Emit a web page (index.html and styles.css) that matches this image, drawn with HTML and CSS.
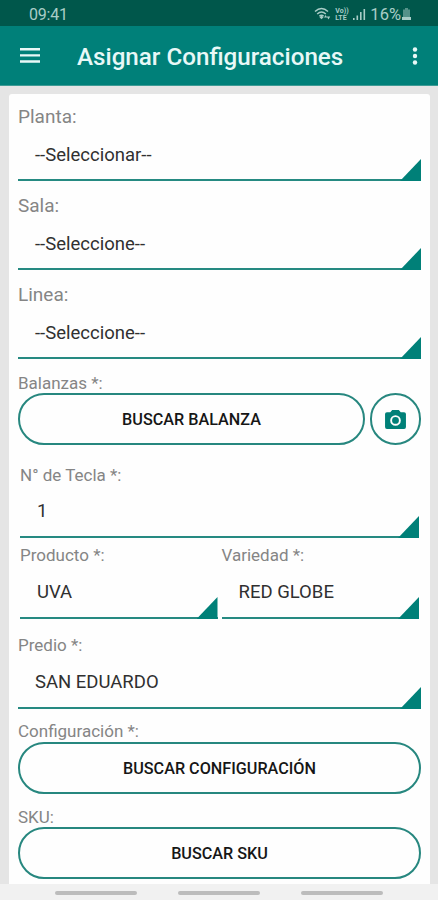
FILE: index.html
```html
<!DOCTYPE html>
<html lang="es">
<head>
<meta charset="utf-8">
<title>Asignar Configuraciones</title>
<link rel="stylesheet" href="styles.css">
</head>
<body>
<div class="status">
  <span class="clock">09:41</span>
  <div class="status-icons">
    <svg class="wifi" width="17" height="14" viewBox="0 0 17 14" fill="none" stroke="currentColor" stroke-width="1.5"><path d="M1 4.500Q7.500-1.500 14 4.500M3.200 7Q7.500 3 11.800 7M5.400 9.300Q7.500 7.300 9.600 9.300"/><path d="M7.500 8.500l-2 1.700 2 2 2-2zM10 10.500l1.600-2.500 1.600 2.500zM12.800 9.500l1.700 3 1.700-3z" fill="currentColor" stroke="none"/></svg>
    <span class="volte"><span>Vo))</span><span>LTE</span></span>
    <svg class="signal" width="13" height="13" viewBox="0 0 13 13" fill="currentColor"><path d="M0 10h1.600v2H0zM3.500 7.500h1.600V12H3.500zM7 4h1.600v8H7zM10.500 1h1.600v11h-1.600z"/></svg>
    <span class="percent">16%</span>
    <svg class="battery" width="9" height="13" viewBox="0 0 9 13" fill="currentColor"><path d="M3 0h3v1.500h2V9H1V1.500h2z" opacity=".5"/><path d="M0 9h9v3H0z"/></svg>
  </div>
</div>
<header class="appbar">
  <svg class="menu" width="20" height="15" viewBox="0 0 20 15" fill="currentColor"><path d="M0 0h20v2.500H0zM0 6.200h20v2.400H0zM0 12.300h20v2.400H0z"/></svg>
  <h1>Asignar Configuraciones</h1>
  <svg class="more" width="6" height="18" viewBox="0 0 6 18" fill="currentColor"><circle cx="3" cy="2.500" r="2.200"/><circle cx="3" cy="9" r="2.200"/><circle cx="3" cy="15.500" r="2.200"/></svg>
</header>
<main>
  <form class="card">
    <div class="field large"><label>Planta:</label><div class="select">--Seleccionar--</div></div>
    <div class="field large"><label>Sala:</label><div class="select">--Seleccione--</div></div>
    <div class="field large"><label>Linea:</label><div class="select">--Seleccione--</div></div>
    <div class="group balanzas">
      <label>Balanzas *:</label>
      <div class="row">
        <button type="button" class="pill">BUSCAR BALANZA</button>
        <button type="button" class="round"><svg width="21" height="19" viewBox="0 0 22 20"><path fill="currentColor" fill-rule="evenodd" d="M7.500 0h7l2 2.300H20a2 2 0 0 1 2 2V18a2 2 0 0 1-2 2H2a2 2 0 0 1-2-2V4.300a2 2 0 0 1 2-2h3.500zM11 5.400a5.600 5.600 0 1 0 0 11.200 5.600 5.600 0 0 0 0-11.200zM11 7.400a3.600 3.600 0 1 1 0 7.200 3.600 3.600 0 0 1 0-7.200z"/></svg></button>
      </div>
    </div>
    <div class="inset">
      <div class="field tecla"><label>N° de Tecla *:</label><div class="select">1</div></div>
      <div class="pair">
        <div class="field"><label>Producto *:</label><div class="select">UVA</div></div>
        <div class="field"><label>Variedad *:</label><div class="select">RED GLOBE</div></div>
      </div>
    </div>
    <div class="field predio"><label>Predio *:</label><div class="select">SAN EDUARDO</div></div>
    <div class="group config">
      <label>Configuración *:</label>
      <button type="button" class="pill">BUSCAR CONFIGURACIÓN</button>
    </div>
    <div class="group sku">
      <label>SKU:</label>
      <button type="button" class="pill">BUSCAR SKU</button>
    </div>
  </form>
</main>
<nav class="navbar"><i></i><i></i><i></i></nav>
</body>
</html>
```
FILE: styles.css
```css
* { box-sizing: border-box; }
body {
  margin: 0;
  width: 438px;
  height: 900px;
  overflow: hidden;
  display: flex;
  flex-direction: column;
  background: #e5e5e5;
  font-family: Roboto, "Liberation Sans", sans-serif;
  color: #303030;
}
.status {
  height: 26px;
  flex: none;
  display: flex;
  align-items: center;
  justify-content: space-between;
  padding: 2px 27px 0 29px;
  background: #00574b;
  color: #a9cdc7;
  font-size: 16px;
}
.clock { letter-spacing: -0.2px; }
.status-icons { display: flex; align-items: center; }
.wifi { margin-right: 1px; }
.volte {
  display: flex;
  flex-direction: column;
  width: 14px;
  margin: 0 4px 0 3px;
  font-size: 7px;
  font-weight: 700;
  line-height: 8px;
}
.volte span + span { margin-top: -1px; }
.percent { margin: 0 1px 0 4px; font-size: 16.500px; }
.appbar {
  height: 60px;
  flex: none;
  display: flex;
  align-items: center;
  padding: 0 20px;
  background: #008079;
  border-bottom: 1px solid #3e9b95;
  color: #e8f8f7;
}
.appbar h1 {
  flex: 1;
  margin: 2px 0 0 37px;
  font-size: 24.200px;
  font-weight: 500;
  line-height: 30px;
  white-space: nowrap;
}
main { flex: 1; padding: 8px 8px 0 9px; }
.card {
  height: 790px;
  padding: 11px 9px 0;
  border-radius: 3px 3px 0 0;
  background: #fefefe;
}
label {
  display: block;
  height: 20px;
  line-height: 20px;
  font-size: 17px;
  color: #858585;
  white-space: nowrap;
}
.select {
  position: relative;
  height: 53px;
  padding-left: 17px;
  border-bottom: 2px solid #268a82;
  font-size: 18.500px;
  line-height: 53px;
  white-space: nowrap;
}
.select::after {
  content: "";
  position: absolute;
  right: 0;
  bottom: -2px;
  width: 21px;
  height: 22px;
  background: #008078;
  clip-path: polygon(100% 0, 100% 100%, 0 100%);
}
.large label { height: 24px; line-height: 23px; font-size: 19px; }
.large .select { height: 52px; line-height: 52px; }
.large + .large { padding-top: 13px; }
.balanzas { padding-top: 14px; }
.row { display: flex; gap: 5px; }
.pill, .round {
  height: 52px;
  border: 2px solid #27877f;
  border-radius: 26px;
  background: #fefefe;
  padding: 0;
}
.pill {
  display: block;
  width: 100%;
  padding-top: 2px;
  font: 500 16.200px/46px Roboto, sans-serif;
  color: #161616;
}
.row .pill { flex: 1; }
.round {
  flex: none;
  width: 51px;
  display: flex;
  align-items: center;
  justify-content: center;
  color: #008078;
}
.inset { padding: 20px 2px 0; }
.pair { display: grid; grid-template-columns: 1fr 1fr; gap: 4px; padding-top: 8px; }
.pair label, .config label { line-height: 19px; }
.pair .select { line-height: 52px; }
.predio { padding-top: 17px; }
.predio label { line-height: 19px; }
.config { padding-top: 13px; }
.sku { padding-top: 13px; }
.navbar {
  height: 16px;
  flex: none;
  display: flex;
  justify-content: center;
  gap: 41px;
  padding-top: 7px;
  background: #f1f1f1;
}
.navbar i { width: 82px; height: 4px; border-radius: 2px; background: #bcbcbc; }
```
